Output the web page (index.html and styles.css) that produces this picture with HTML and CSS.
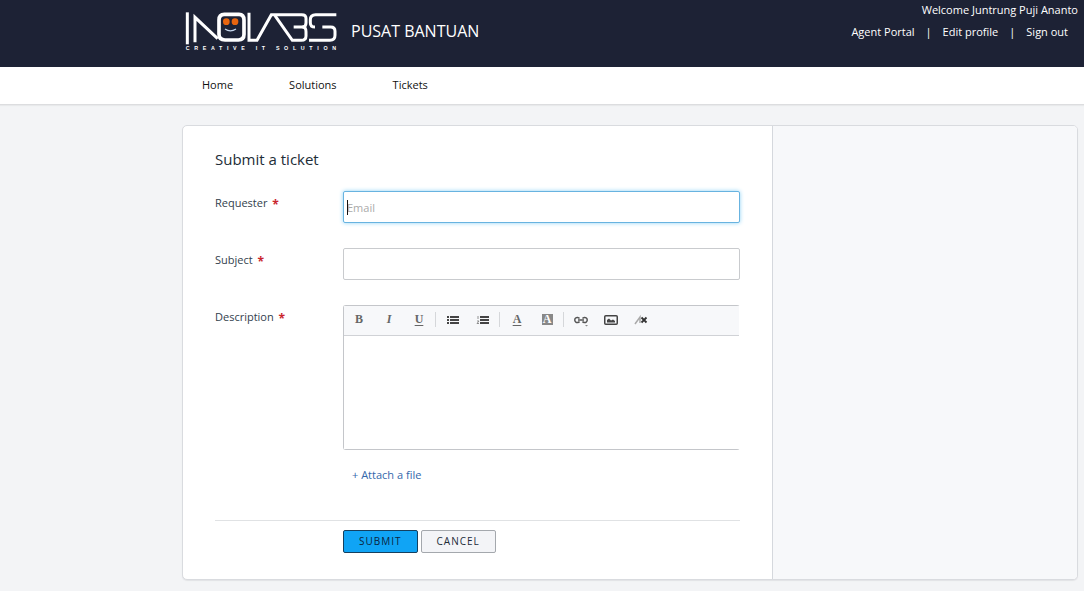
FILE: index.html
```html
<!DOCTYPE html>
<html lang="en">
<head>
<meta charset="utf-8">
<meta name="viewport" content="width=device-width, initial-scale=1">
<title>Submit a ticket : Pusat Bantuan</title>
<link rel="stylesheet" href="styles.css">
</head>
<body>
<header class="banner">
  <a class="brand" href="#">
    <svg class="logo" viewBox="30 36 456 117" role="img" aria-label="Inolabs, creative IT solution">
      <g fill="none" stroke="#fff" stroke-width="9">
        <path d="M37 37V133"/>
        <path d="M60 127V52L128 116"/>
        <path d="M148 43H192Q207 43 207 60V103Q207 120 190 120H150Q132 120 132 103V60Q132 43 148 43Z" stroke-width="11"/>
        <path d="M222 38V121H246L289 44H380Q393 44 393 55V69Q393 81 382 81H356"/>
        <path d="M300 47L352 121H379Q393 121 393 108V95Q393 81 382 81"/>
        <path d="M484 44H422Q406 44 406 59V68Q406 81 420 81M442 81H467Q480 81 480 94V106Q480 121 465 121H402"/>
      </g>
      <circle cx="154" cy="65" r="10" fill="#e8650f"/>
      <circle cx="180" cy="65" r="10" fill="#e8650f"/>
      <path d="M150 87Q166 98 183 87" fill="none" stroke="#c9daf0" stroke-width="4"/>
      <text class="tagline" x="32" y="150">CREATIVE IT SOLUTION</text>
    </svg>
    <span class="brand-name">PUSAT BANTUAN</span>
  </a>
  <div class="account">
    <span>Welcome Juntrung Puji Ananto</span>
    <div class="account-links">
      <a href="#">Agent Portal</a>
      <span>|</span>
      <a href="#">Edit profile</a>
      <span>|</span>
      <a href="#">Sign out</a>
    </div>
  </div>
</header>
<nav class="tabs">
  <a href="#">Home</a>
  <a href="#">Solutions</a>
  <a href="#">Tickets</a>
</nav>
<div class="page">
  <main class="content">
    <h1>Submit a ticket</h1>
    <form class="ticket">
      <div class="row">
        <label for="requester">Requester <b>*</b></label>
        <div class="field focused"><input id="requester" type="text" placeholder="Email"></div>
      </div>
      <div class="row">
        <label for="subject">Subject <b>*</b></label>
        <div class="field"><input id="subject" type="text"></div>
      </div>
      <div class="row">
        <label for="description">Description <b>*</b></label>
        <div class="field">
          <div class="editor">
            <div class="toolbar">
              <button type="button" class="glyph" aria-label="Bold">B</button>
              <button type="button" class="glyph italic" aria-label="Italic">I</button>
              <button type="button" class="glyph underline" aria-label="Underline">U</button>
              <i class="divider"></i>
              <button type="button" aria-label="Bulleted list"><svg width="14" height="12" viewBox="0 0 14 12"><path d="M1 3H3M1 6H3M1 9H3M4 3H13M4 6H13M4 9H13" stroke="#444" stroke-width="2"/></svg></button>
              <button type="button" aria-label="Numbered list"><svg width="14" height="12" viewBox="0 0 14 12"><path d="M4 3H13M4 6H13M4 9H13" stroke="#444" stroke-width="2"/><path d="M2 2V5M1 7H3L1 9.500H3" stroke="#777" fill="none" stroke-width=".8"/></svg></button>
              <i class="divider"></i>
              <button type="button" class="glyph underline" aria-label="Text colour">A</button>
              <button type="button" class="glyph" aria-label="Highlight colour"><span class="swatch">A</span></button>
              <i class="divider"></i>
              <button type="button" aria-label="Insert link"><svg width="16" height="14" viewBox="0 0 16 14"><g fill="none" stroke="#555" stroke-width="1.500"><path d="M6.500 5.500A2.600 2.600 0 1 0 6.500 8.500M9.500 5.500A2.600 2.600 0 1 1 9.500 8.500M5 7H11"/></g><path d="M12 12H15L13.500 13.500Z" fill="#888"/></svg></button>
              <button type="button" aria-label="Insert image"><svg width="14" height="12" viewBox="0 0 14 12"><rect x=".75" y="1.750" width="12.500" height="8.500" rx="1" fill="none" stroke="#444" stroke-width="1.500"/><path d="M3 8.500V6L5 4.500L7 6.500L9 5.500L11 7V8.500Z" fill="#444"/></svg></button>
              <button type="button" aria-label="Clear formatting"><svg width="14" height="12" viewBox="0 0 14 12"><path d="M1 10L6 3V9" fill="none" stroke="#aaa" stroke-width="1.500"/><path d="M7.500 3.500L12.500 8.500M12.500 3.500L7.500 8.500" stroke="#333" stroke-width="1.800"/></svg></button>
            </div>
            <textarea id="description"></textarea>
          </div>
          <a class="attach" href="#">+ Attach a file</a>
        </div>
      </div>
      <div class="actions">
        <button type="submit" class="btn primary">SUBMIT</button>
        <button type="button" class="btn">CANCEL</button>
      </div>
    </form>
  </main>
  <aside class="side"></aside>
</div>
</body>
</html>
```
FILE: styles.css
```css
* { box-sizing: border-box; }

body {
  margin: 0;
  background: #f3f4f6;
  color: #333;
  font: 11px/16px "Open Sans", "Noto Sans", sans-serif;
}

a { color: inherit; text-decoration: none; }

.banner {
  display: flex;
  justify-content: space-between;
  align-items: flex-start;
  min-height: 67px;
  padding: 0 6px 0 185px;
  background: #1d2235;
  color: #fff;
}

.brand { display: flex; align-items: center; gap: 14px; padding-top: 12px; }
.logo { width: 152px; height: 39px; overflow: visible; }
.tagline {
  fill: #fff;
  font: bold 16px "Liberation Sans", sans-serif;
  letter-spacing: 14px;
}
.brand-name { font-size: 16px; line-height: 24px; padding-bottom: 2px; }

.account { padding-top: 2px; text-align: right; }
.account-links { display: flex; justify-content: flex-end; gap: 11px; padding: 6px 10px 0 0; }

.tabs {
  display: flex;
  gap: 56px;
  padding: 10px 6px 11px 202px;
  background: #fff;
  border-bottom: 1px solid #dcdddf;
  box-shadow: 0 1px 1px #e8e9eb;
  color: #111;
}

.page {
  display: grid;
  grid-template-columns: minmax(0, 589fr) minmax(0, 305fr);
  margin: 20px 6px 12px 182px;
  border: 1px solid #d9dbdf;
  border-radius: 5px;
  box-shadow: 0 1px 1px #e2e3e6;
  background: #fff;
  overflow: hidden;
}
.content { padding: 20px 32px 26px; }
.side { background: #f7f8fa; border-left: 1px solid #d5d8dd; }

h1 { margin: 0; font-size: 15px; line-height: 26px; font-weight: 400; color: #222d38; }

.ticket { padding-top: 19px; }
.row { display: flex; margin-bottom: 25px; color: #33414d; }
.row label { flex: 0 0 128px; padding-top: 4px; }
.row label b { margin-left: 2px; color: #c9252d; font-size: 12px; line-height: 12px; vertical-align: -2px; }
.field { position: relative; flex: 1; min-width: 0; }

input {
  display: block;
  width: 100%;
  height: 32px;
  padding: 1px 3px;
  border: 1px solid #c9cbce;
  border-radius: 2px;
  background: #fff;
  font: inherit;
}
input::placeholder { color: #aaa; }
.focused input { border-color: #68b3e0; box-shadow: 0 0 4px #8ed2f5; outline: 0; }
.focused::before {
  content: "";
  position: absolute;
  left: 4px;
  top: 9px;
  width: 1px;
  height: 15px;
  background: #111;
}

.editor { border: 1px solid #c4c6ca; border-right-color: transparent; border-radius: 3px; }
.toolbar {
  display: flex;
  align-items: center;
  height: 30px;
  padding-bottom: 2px;
  background: #f7f8fa;
  border-bottom: 1px solid #d0d2d6;
}
.toolbar button {
  display: flex;
  justify-content: center;
  align-items: center;
  width: 30px;
  height: 28px;
  padding: 0;
  border: 0;
  background: none;
}
.toolbar .glyph { font: bold 12px "Liberation Serif", serif; color: #666; }
.toolbar .italic { font-style: italic; }
.toolbar .underline { text-decoration: underline; text-underline-offset: 2px; }
.swatch { width: 11px; line-height: 11px; background: #888; color: #fff; }
.divider { width: 1px; height: 15px; margin: 0 2px 0 1px; background: #d5d7da; }

textarea {
  display: block;
  width: 100%;
  height: 113px;
  padding: 6px;
  border: 0;
  background: #fff;
  font: inherit;
  resize: none;
}
.attach { display: inline-block; margin: 17px 0 0 9px; color: #3468ab; }

.actions {
  display: flex;
  gap: 3px;
  margin-top: 37px;
  padding: 9px 0 0 128px;
  border-top: 1px solid #e0e2e4;
}
.btn {
  height: 23px;
  padding: 0 15px 2px;
  border: 1px solid #a4a8ad;
  border-radius: 2px;
  background: #f3f4f7;
  color: #222c38;
  font: 10px/18px "Open Sans", "Noto Sans", sans-serif;
  letter-spacing: 1px;
}
.primary { background: #10a4f5; border-color: #15405f; color: #0b2540; }
```
